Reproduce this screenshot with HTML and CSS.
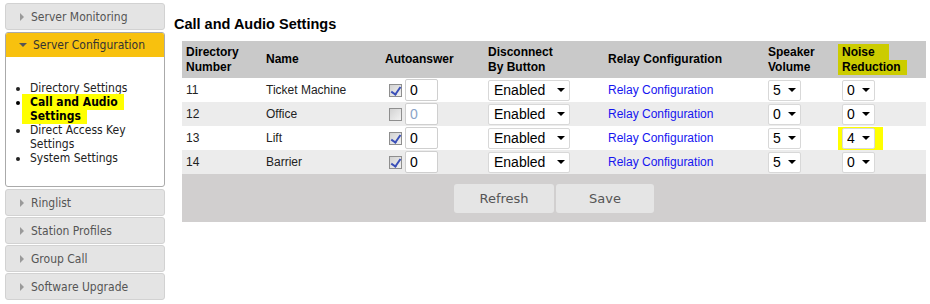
FILE: index.html
```html
<!DOCTYPE html>
<html lang="en">
<head>
    <meta charset="UTF-8">
    <title>Call and Audio Settings</title>
    <link rel="stylesheet" href="styles.css">
</head>
<body>
    <div class="side">
        <div class="panel"><span class="arr"></span>Server Monitoring</div>
        <div class="panel open">
            <div class="head"><span class="arr down"></span>Server Configuration</div>
            <ul class="menu">
                <li>Directory Settings</li>
                <li class="cur"><span class="hl">Call and Audio Settings</span></li>
                <li>Direct Access Key Settings</li>
                <li>System Settings</li>
            </ul>
        </div>
        <div class="panel"><span class="arr"></span>Ringlist</div>
        <div class="panel"><span class="arr"></span>Station Profiles</div>
        <div class="panel"><span class="arr"></span>Group Call</div>
        <div class="panel"><span class="arr"></span>Software Upgrade</div>
    </div>

    <div class="main">
        <h2>Call and Audio Settings</h2>
        <table class="grid">
            <colgroup>
                <col class="c1"><col class="c2"><col class="c3"><col class="c4">
                <col class="c5"><col class="c6"><col class="c7">
            </colgroup>
            <thead>
                <tr>
                    <th>Directory<br>Number</th>
                    <th>Name</th>
                    <th>Autoanswer</th>
                    <th>Disconnect<br>By Button</th>
                    <th>Relay Configuration</th>
                    <th>Speaker<br>Volume</th>
                    <th class="nr"><span class="mark m1">Noise</span><span class="mark m2">Reduction</span></th>
                </tr>
            </thead>
            <tbody>
                <tr>
                    <td>11</td>
                    <td>Ticket Machine</td>
                    <td><span class="chk on"></span><input class="num" type="text" value="0"></td>
                    <td><span class="sel wide"><select><option>Enabled</option></select></span></td>
                    <td><a href="#">Relay Configuration</a></td>
                    <td><span class="sel"><select><option>5</option></select></span></td>
                    <td><span class="sel"><select><option>0</option></select></span></td>
                </tr>
                <tr>
                    <td>12</td>
                    <td>Office</td>
                    <td><span class="chk"></span><input class="num" type="text" value="0" disabled></td>
                    <td><span class="sel wide"><select><option>Enabled</option></select></span></td>
                    <td><a href="#">Relay Configuration</a></td>
                    <td><span class="sel"><select><option>0</option></select></span></td>
                    <td><span class="sel"><select><option>0</option></select></span></td>
                </tr>
                <tr>
                    <td>13</td>
                    <td>Lift</td>
                    <td><span class="chk on"></span><input class="num" type="text" value="0"></td>
                    <td><span class="sel wide"><select><option>Enabled</option></select></span></td>
                    <td><a href="#">Relay Configuration</a></td>
                    <td><span class="sel"><select><option>5</option></select></span></td>
                    <td><span class="hlbox"><span class="sel"><select><option>4</option></select></span></span></td>
                </tr>
                <tr>
                    <td>14</td>
                    <td>Barrier</td>
                    <td><span class="chk on"></span><input class="num" type="text" value="0"></td>
                    <td><span class="sel wide"><select><option>Enabled</option></select></span></td>
                    <td><a href="#">Relay Configuration</a></td>
                    <td><span class="sel"><select><option>5</option></select></span></td>
                    <td><span class="sel"><select><option>0</option></select></span></td>
                </tr>
            </tbody>
        </table>
        <div class="btns">
            <button class="refresh">Refresh</button>
            <button class="save">Save</button>
        </div>
    </div>
</body>
</html>
```

FILE: styles.css
```css
*{
    margin: 0;
    padding: 0;
    box-sizing: border-box;
}
body{
    display: flex;
    background: #fff;
    font-family: "Liberation Sans", Arial, sans-serif;
}

/* left menu */
.side{
    width: 160px;
    margin: 3px 0 0 5px;
    font-family: "DejaVu Sans Condensed", "DejaVu Sans", sans-serif;
    font-size: 12px;
}
.panel{
    height: 27px;
    line-height: 26px;
    margin-bottom: 1px;
    padding-left: 14px;
    background: #e4e4e4;
    border: 1px solid #d2d2d2;
    border-radius: 3px;
    color: #555;
}
.panel:first-child{
    margin-bottom: 2px;
}
.arr{
    display: inline-block;
    width: 0; height: 0;
    margin-right: 7px;
    vertical-align: 0;
    border-left: 4px solid #9a9a9a;
    border-top: 4px solid transparent;
    border-bottom: 4px solid transparent;
}
.arr.down{
    margin-right: 6px;
    vertical-align: 2px;
    border-left: 4px solid transparent;
    border-right: 4px solid transparent;
    border-top: 4px solid #555;
    border-bottom: 0;
}
.panel.open{
    height: auto;
    padding: 0;
    margin-bottom: 2px;
    background: #fff;
    border: 1px solid #aaa;
    border-radius: 3px;
    overflow: hidden;
}
.open .head{
    height: 24px;
    line-height: 25px;
    padding-left: 13px;
    background: #f8c10e;
    color: #333;
}
.menu{
    padding: 24px 0 21px 24px;
    line-height: 14px;
    color: #222;
}
.menu li{
    list-style: disc;
}
.menu li.cur{
    font-weight: bold;
    color: #000;
}
.hl{
    background: #ffff00;
    margin-left: -8px;
    padding: 1px 6px 1px 8px;
    -webkit-box-decoration-break: clone;
    box-decoration-break: clone;
}

/* content */
.main{
    margin-left: 9px;
}
h2{
    margin: 15px 0 8px;
    font-size: 14.5px;
    line-height: 18px;
    color: #000;
}
.grid{
    margin-left: 8px;
    width: 744px;
    table-layout: fixed;
    border-collapse: collapse;
    font-size: 12px;
}
.c1{ width: 80px; }
.c2{ width: 119px; }
.c3{ width: 103px; }
.c4{ width: 120px; }
.c5{ width: 160px; }
.c6{ width: 74px; }
.c7{ width: 88px; }

.grid th{
    height: 36px;
    padding: 3px 4px;
    line-height: 15px;
    text-align: left;
    vertical-align: middle;
    background: #c9c9c9;
    color: #000;
}
.grid th.nr{
    padding-left: 0;
}
.mark{
    display: block;
    padding-left: 4px;
    background: #cccc00;
}
.m1{ width: 51px; line-height: 16px; }
.m2{ width: 69px; line-height: 15px; }

.grid td{
    height: 24px;
    padding: 0 4px;
    vertical-align: middle;
    color: #222;
    white-space: nowrap;
}
.grid tbody tr:nth-child(even) td{
    background: #ececec;
}
.grid a{
    color: #1515f0;
    text-decoration: none;
}

.chk{
    display: inline-block;
    width: 13px; height: 13px;
    margin: 0 3px 0 4px;
    vertical-align: middle;
    border: 1px solid #8e8e8e;
    background: linear-gradient(135deg, #d2d2d2, #f2f2f2);
    position: relative;
}
.chk.on::after{
    content: "";
    position: absolute;
    left: 3px; top: 0;
    width: 4px; height: 8px;
    border-right: 2px solid #3a4fb8;
    border-bottom: 2px solid #3a4fb8;
    transform: rotate(35deg);
}
.num{
    width: 33px; height: 22px;
    vertical-align: middle;
    padding-left: 4px;
    border: 1px solid #cfcfcf;
    border-radius: 2px;
    background: #fff;
    font-family: "Liberation Sans", Arial, sans-serif;
    font-size: 14px;
    color: #000;
}
.num:disabled{
    color: #8aa4c8;
}

.sel{
    display: inline-block;
    position: relative;
    vertical-align: middle;
}
.sel select{
    -webkit-appearance: none;
    appearance: none;
    width: 33px; height: 21px;
    padding-left: 4px;
    border: 1px solid #d8d8d8;
    border-radius: 2px;
    background: #fff;
    font-family: "Liberation Sans", Arial, sans-serif;
    font-size: 14px;
    color: #000;
    display: block;
}
.sel.wide select{
    width: 82px;
    padding-left: 5px;
}
.sel::after{
    content: "";
    position: absolute;
    right: 5px; top: 8px;
    border-left: 4px solid transparent;
    border-right: 4px solid transparent;
    border-top: 4px solid #000;
}
.hlbox{
    display: inline-block;
    margin-left: -4px;
    padding: 1px 8px 1px 4px;
    background: #ffff00;
}

.btns{
    width: 744px;
    height: 48px;
    margin-left: 8px;
    padding-top: 10px;
    display: flex;
    justify-content: center;
    gap: 2px;
    background: #d1cfcf;
}
.btns button{
    height: 29px;
    border: 0;
    border-radius: 3px;
    background: #e5e5e5;
    font-family: "DejaVu Sans", sans-serif;
    font-size: 13px;
    color: #555;
}
.refresh{ width: 100px; }
.save{ width: 98px; }
```
